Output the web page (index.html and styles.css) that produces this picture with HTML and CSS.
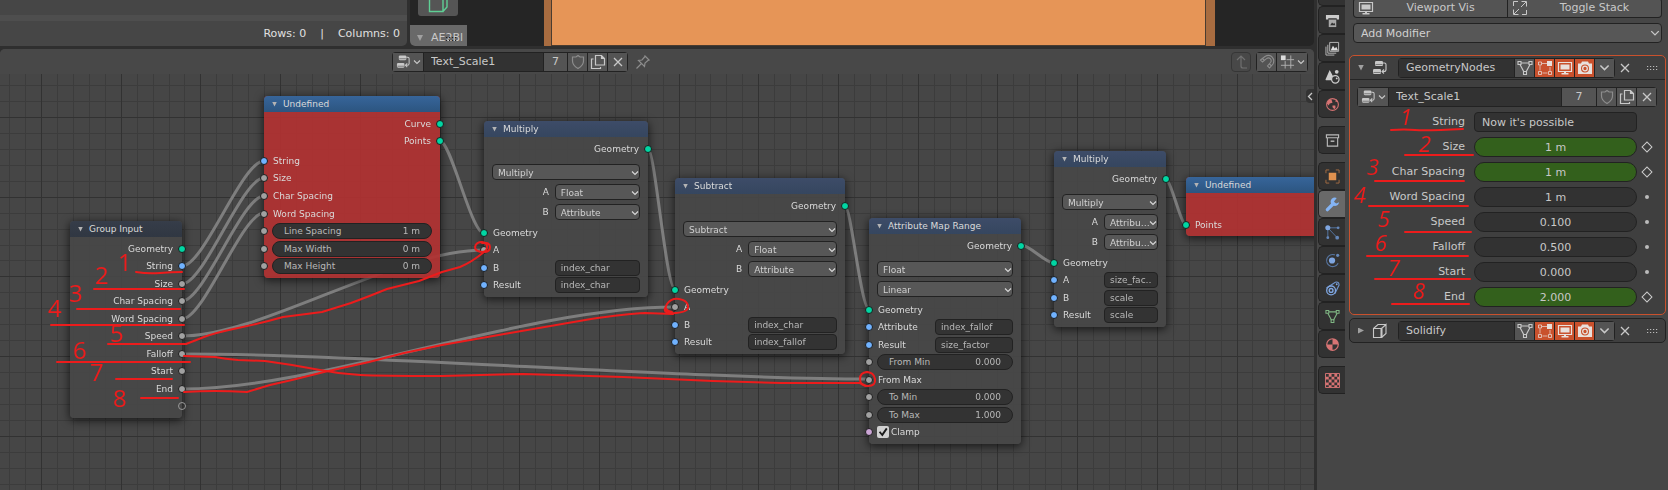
FILE: index.html
```html
<!DOCTYPE html>
<html lang="en">
<head>
    <meta charset="UTF-8">
    <meta name="viewport" content="width=device-width, initial-scale=1.0">
    <title>Geometry Nodes - Text_Scale1</title>
    <link rel="stylesheet" href="styles.css">
</head>
<body>
    <!-- Icon set -->
    <svg class="defs" aria-hidden="true">
        <symbol id="i-chevron" viewBox="0 0 8 8"><path d="M1 2.5 4 5.5 7 2.5" fill="none" stroke="currentColor" stroke-width="1.1"/></symbol>
        <symbol id="i-nodes" viewBox="0 0 16 16">
            <rect x="3" y="1" width="8" height="5" rx="1.2" fill="currentColor"/><rect x="1" y="9" width="8" height="5" rx="1.2" fill="currentColor"/>
            <path d="M3.5 4.5h7M1.5 12.5h7" stroke="#444" stroke-width=".6"/>
            <path d="M11 3h1.5q1.5 0 1.5 1.500v5q0 2-2 2H10M12 9.500l-2 2 2 2" fill="none" stroke="currentColor" stroke-width="1.100"/>
        </symbol>
        <symbol id="i-shield" viewBox="0 0 16 16"><path d="M8 1.500 10 3h3.500v4q0 4.500-5.500 7.500Q2.500 11.500 2.500 7V3H6z" fill="none" stroke="currentColor" stroke-width="1.200"/></symbol>
        <symbol id="i-copy" viewBox="0 0 16 16"><path d="M5.500 1.500h6l3 3v6.500h-9zM11.500 1.500v3h3M3.500 5h-2v9.500h9V13" fill="none" stroke="currentColor" stroke-width="1.200"/></symbol>
        <symbol id="i-close" viewBox="0 0 16 16"><path d="m4 4 8 8m0-8-8 8" stroke="currentColor" stroke-width="1.300"/></symbol>
        <symbol id="i-pin" viewBox="0 0 16 16"><path d="M9.500 1.500 14.500 6.500M10 2.500 7 6 3.500 6.500l6 6L10 9l3.500-3M6.500 9.500 1.500 14.500" fill="none" stroke="currentColor" stroke-width="1.200"/></symbol>
        <symbol id="i-up" viewBox="0 0 16 16"><path d="M4 6l4-4 4 4M8 2v10q0 2 2 2h4" fill="none" stroke="currentColor" stroke-width="1.200"/></symbol>
        <symbol id="i-magnet" viewBox="0 0 16 16"><path d="M1.500 6 6 2.500q4-2.500 7 .5t1 7L10.500 14 8.500 12l3-3.500q1.500-2-.2-3.800t-3.800 0L3.500 8zM3.500 4.500l2 2M12.500 12l-2-2" fill="none" stroke="currentColor" stroke-width="1.100"/></symbol>
        <symbol id="i-snap" viewBox="0 0 16 16"><path d="M5.500 7v8M11.500 1v14M7 5.500h8M1 11.500h14" stroke="currentColor" opacity=".8"/><rect x="1" y="1" width="5" height="5" fill="#ddd"/></symbol>
        <symbol id="i-mesh" viewBox="0 0 16 16"><path d="M4 3h8M3 4.500 7 12M13 4.500 9 12" stroke="currentColor" stroke-width="1.200"/><path d="M1 1.500h3v3H1zM12 1.500h3v3h-3zM6.500 11.500h3v3h-3z" fill="none" stroke="currentColor" stroke-width="1.100"/></symbol>
        <symbol id="i-edit" viewBox="0 0 16 16"><path d="M5 3.500h5M3 5.500v5M5.500 13h5M13 7v4" stroke="currentColor" opacity=".7"/><path d="M1.500 2h3v3h-3zM1.500 11.500h3v3h-3zM11.500 11.500h3v3h-3z" fill="none" stroke="currentColor" opacity=".75"/><rect x="10" y="1" width="5" height="5" fill="currentColor"/></symbol>
        <symbol id="i-screen" viewBox="0 0 16 16"><path d="M1.500 2.500h13v9h-13z" fill="none" stroke="currentColor" stroke-width="1.200"/><path d="M3.500 4.500h9v5h-9zM4.500 13h7v1.500h-7zM7 11h2v3H7z" fill="currentColor"/></symbol>
        <symbol id="i-camera" viewBox="0 0 16 16"><path fill-rule="evenodd" d="M5 1.500h6l1 2h3V14H1V3.500h3zM8 4.500a4 4 0 1 0 0 8 4 4 0 0 0 0-8z" fill="currentColor"/><circle cx="8" cy="8.500" r="2.300" fill="none" stroke="currentColor" stroke-width="1.300"/></symbol>
        <symbol id="i-solidify" viewBox="0 0 16 16"><path d="M1.500 5.500h8v9h-8zM9.500 5.500 14 1.500v9l-4.500 4M1.500 5.500l4.500-4h8" fill="none" stroke="currentColor" stroke-width="1.100"/><path d="M9.500 5.500v9" stroke="currentColor" stroke-width="2"/></symbol>
        <symbol id="i-expand" viewBox="0 0 16 16"><path d="M9 7l5-5M9.500 1.500h5v5M7 9l-5 5M1.500 9.500v5h5M1.500 6V1.500H6M10 14.500h4.500V10" fill="none" stroke="currentColor"/></symbol>
        <symbol id="i-grip" viewBox="0 0 12 6"><path d="M0 1.500h12M0 4.500h12" stroke="currentColor" stroke-width="1.200" stroke-dasharray="1.200 1.800"/></symbol>
    </svg>

    <div class="app">
        <div class="editors">
            <div class="top-row">
                <section class="spreadsheet">
                    <div class="sheet-rows"></div>
                    <footer class="sheet-footer"><span>Rows: 0</span><span>|</span><span>Columns: 0</span></footer>
                </section>
                <section class="viewport">
                    <div class="viewport-tools">
                        <button class="tool-button" aria-label="Add cube">
                            <svg width="22" height="14" viewBox="0 0 22 14"><path d="M2.500-2v13.500H16V-2M16 11.500 20 7V-2" fill="none" stroke="#5fcf95" stroke-width="1.400"/></svg>
                        </button>
                        <div class="operator"><i class="tri"></i><span>AE2Bl</span><svg class="operator-grip" width="12" height="6"><use href="#i-grip"/></svg></div>
                    </div>
                    <div class="plane"><div class="plane-face"></div></div>
                </section>
            </div>

            <main class="node-editor">
                <header class="node-header">
                    <div class="id-block">
                        <button class="browse" aria-label="Browse node trees"><svg width="15" height="16"><use href="#i-nodes"/></svg><svg width="8" height="8"><use href="#i-chevron"/></svg></button>
                        <input class="id-name" type="text" value="Text_Scale1" aria-label="Node tree name">
                        <button class="users">7</button>
                        <button class="dim" aria-label="Fake user"><svg width="16" height="16"><use href="#i-shield"/></svg></button>
                        <button aria-label="New"><svg width="16" height="16"><use href="#i-copy"/></svg></button>
                        <button aria-label="Unlink"><svg width="16" height="16"><use href="#i-close"/></svg></button>
                    </div>
                    <button class="plain" aria-label="Pin"><svg width="16" height="16"><use href="#i-pin"/></svg></button>
                    <div class="header-right">
                        <button class="parent" aria-label="Parent node tree"><svg width="16" height="16"><use href="#i-up"/></svg></button>
                        <div class="id-block">
                            <button class="dim" aria-label="Snap"><svg width="16" height="16"><use href="#i-magnet"/></svg></button>
                            <button class="browse" aria-label="Snap element"><svg width="15" height="16"><use href="#i-snap"/></svg><svg width="8" height="8"><use href="#i-chevron"/></svg></button>
                        </div>
                    </div>
                </header>

                <div class="canvas" id="canvas">
                    <canvas class="grid" id="grid"></canvas>

                    <!-- Links -->
                    <svg class="layer" width="1314" height="416" viewBox="0 74 1314 416">
                        <g class="links">
                            <path d="M182 266C204 266 242 161 264 161"/>
                            <path d="M182 284C204 284 242 178 264 178"/>
                            <path d="M182 301C204 301 242 196 264 196"/>
                            <path d="M182 319C204 319 242 213 264 213"/>
                            <path d="M182 336C262 336 395 250 484 250"/>
                            <path d="M182 354C362 354 689 379 869 379"/>
                            <path d="M182 389C322 389 525 307 675 307"/>
                            <path d="M440 141C451 141 471 233 484 233"/>
                            <path d="M648 149C655 149 666 289 675 289"/>
                            <path d="M845 206C851 206 861 309 869 309"/>
                            <path d="M1021 245C1030 245 1045 263 1054 263"/>
                            <path d="M1166 180C1171 180 1181 225 1186 225"/>
                        </g>
                    </svg>

                    <!-- Nodes -->
                    <article class="node group-input">
                        <h2 class="node-title"><i class="tri"></i>Group Input</h2>
                        <div class="rows rows-10">
                            <div class="row out">Geometry<i class="socket geo"></i></div>
                            <div class="row out">String<i class="socket str"></i></div>
                            <div class="row out">Size<i class="socket"></i></div>
                            <div class="row out">Char Spacing<i class="socket"></i></div>
                            <div class="row out">Word Spacing<i class="socket"></i></div>
                            <div class="row out">Speed<i class="socket"></i></div>
                            <div class="row out">Falloff<i class="socket"></i></div>
                            <div class="row out">Start<i class="socket"></i></div>
                            <div class="row out">End<i class="socket"></i></div>
                            <div class="row out"><i class="socket empty"></i></div>
                        </div>
                    </article>

                    <article class="node undefined string-node">
                        <h2 class="node-title"><i class="tri"></i>Undefined</h2>
                        <div class="rows rows-2">
                            <div class="row out">Curve<i class="socket geo"></i></div>
                            <div class="row out">Points<i class="socket geo"></i></div>
                        </div>
                        <div class="rows rows-7">
                            <div class="row"><i class="socket str"></i>String</div>
                            <div class="row"><i class="socket"></i>Size</div>
                            <div class="row"><i class="socket"></i>Char Spacing</div>
                            <div class="row"><i class="socket"></i>Word Spacing</div>
                            <div class="row"><i class="socket"></i><div class="slider"><label for="line-spacing">Line Spacing</label><input id="line-spacing" type="text" value="1 m"></div></div>
                            <div class="row"><i class="socket"></i><div class="slider"><label for="max-width">Max Width</label><input id="max-width" type="text" value="0 m"></div></div>
                            <div class="row"><i class="socket"></i><div class="slider"><label for="max-height">Max Height</label><input id="max-height" type="text" value="0 m"></div></div>
                        </div>
                    </article>

                    <article class="node multiply">
                        <h2 class="node-title"><i class="tri"></i>Multiply</h2>
                        <div class="row out">Geometry<i class="socket geo"></i></div>
                        <div class="options">
                            <div class="option"><div class="select"><select aria-label="Operation"><option>Multiply</option></select><svg><use href="#i-chevron"/></svg></div></div>
                            <div class="option split"><label for="m1-a">A</label><div class="select"><select id="m1-a"><option>Float</option></select><svg><use href="#i-chevron"/></svg></div></div>
                            <div class="option split"><label for="m1-b">B</label><div class="select"><select id="m1-b"><option>Attribute</option></select><svg><use href="#i-chevron"/></svg></div></div>
                        </div>
                        <div class="rows rows-4">
                            <div class="row"><i class="socket geo"></i>Geometry</div>
                            <div class="row"><i class="socket"></i>A</div>
                            <div class="row split"><i class="socket str"></i><label for="m1-bn">B</label><input class="text" id="m1-bn" type="text" value="index_char"></div>
                            <div class="row split"><i class="socket str"></i><label for="m1-r">Result</label><input class="text" id="m1-r" type="text" value="index_char"></div>
                        </div>
                    </article>

                    <article class="node subtract">
                        <h2 class="node-title"><i class="tri"></i>Subtract</h2>
                        <div class="row out">Geometry<i class="socket geo"></i></div>
                        <div class="options">
                            <div class="option"><div class="select"><select aria-label="Operation"><option>Subtract</option></select><svg><use href="#i-chevron"/></svg></div></div>
                            <div class="option split"><label for="s-a">A</label><div class="select"><select id="s-a"><option>Float</option></select><svg><use href="#i-chevron"/></svg></div></div>
                            <div class="option split"><label for="s-b">B</label><div class="select"><select id="s-b"><option>Attribute</option></select><svg><use href="#i-chevron"/></svg></div></div>
                        </div>
                        <div class="rows rows-4">
                            <div class="row"><i class="socket geo"></i>Geometry</div>
                            <div class="row"><i class="socket"></i>A</div>
                            <div class="row split"><i class="socket str"></i><label for="s-bn">B</label><input class="text" id="s-bn" type="text" value="index_char"></div>
                            <div class="row split"><i class="socket str"></i><label for="s-r">Result</label><input class="text" id="s-r" type="text" value="index_fallof"></div>
                        </div>
                    </article>

                    <article class="node map-range">
                        <h2 class="node-title"><i class="tri"></i>Attribute Map Range</h2>
                        <div class="row out">Geometry<i class="socket geo"></i></div>
                        <div class="options">
                            <div class="option"><div class="select"><select aria-label="Data type"><option>Float</option></select><svg><use href="#i-chevron"/></svg></div></div>
                            <div class="option"><div class="select"><select aria-label="Interpolation"><option>Linear</option></select><svg><use href="#i-chevron"/></svg></div></div>
                        </div>
                        <div class="rows rows-8">
                            <div class="row"><i class="socket geo"></i>Geometry</div>
                            <div class="row split"><i class="socket str"></i><label for="r-a">Attribute</label><input class="text" id="r-a" type="text" value="index_fallof"></div>
                            <div class="row split"><i class="socket str"></i><label for="r-r">Result</label><input class="text" id="r-r" type="text" value="size_factor"></div>
                            <div class="row"><i class="socket"></i><div class="slider"><label for="from-min">From Min</label><input id="from-min" type="text" value="0.000"></div></div>
                            <div class="row"><i class="socket"></i>From Max</div>
                            <div class="row"><i class="socket"></i><div class="slider"><label for="to-min">To Min</label><input id="to-min" type="text" value="0.000"></div></div>
                            <div class="row"><i class="socket"></i><div class="slider"><label for="to-max">To Max</label><input id="to-max" type="text" value="1.000"></div></div>
                            <div class="row"><i class="socket bool"></i><input class="check" id="clamp" type="checkbox" checked><label for="clamp">Clamp</label></div>
                        </div>
                    </article>

                    <article class="node multiply-scale">
                        <h2 class="node-title"><i class="tri"></i>Multiply</h2>
                        <div class="row out">Geometry<i class="socket geo"></i></div>
                        <div class="options">
                            <div class="option"><div class="select"><select aria-label="Operation"><option>Multiply</option></select><svg><use href="#i-chevron"/></svg></div></div>
                            <div class="option split"><label for="m2-a">A</label><div class="select"><select id="m2-a"><option>Attribu…</option></select><svg><use href="#i-chevron"/></svg></div></div>
                            <div class="option split"><label for="m2-b">B</label><div class="select"><select id="m2-b"><option>Attribu…</option></select><svg><use href="#i-chevron"/></svg></div></div>
                        </div>
                        <div class="rows rows-4">
                            <div class="row"><i class="socket geo"></i>Geometry</div>
                            <div class="row split"><i class="socket str"></i><label for="m2-an">A</label><input class="text" id="m2-an" type="text" value="size_fac…"></div>
                            <div class="row split"><i class="socket str"></i><label for="m2-bn">B</label><input class="text" id="m2-bn" type="text" value="scale"></div>
                            <div class="row split"><i class="socket str"></i><label for="m2-r">Result</label><input class="text" id="m2-r" type="text" value="scale"></div>
                        </div>
                    </article>

                    <article class="node undefined points-node">
                        <h2 class="node-title"><i class="tri"></i>Undefined</h2>
                        <div class="row"><i class="socket geo"></i>Points</div>
                    </article>

                    <!-- Annotation strokes -->
                    <svg class="layer ink" width="1314" height="416" viewBox="0 74 1314 416">
                        <path d="M136 272q12 2 24 1t22-1M94 289h90M77 309h103M51 325h133M108 344h78M57 362h133M116 379h56M141 398h37"/>
                        <path d="M186 344Q194 341 204 337T238 328 283 317L322 312 351 303Q370 296 387 289L419 281 442 272 460 267Q472 262 484 252"/>
                        <path d="M484 252q-9 0-9-5 1-5 7-5 6 1 5 6-1 4-5 4M482 243q8-1 8 4t-6 5"/>
                        <path d="M184 356L215 357Q225 359 238 360L265 361 292 365 320 370Q340 374 360 375T442 376L523 374 623 377 713 381 781 383H860L866 386"/>
                        <path d="M866 372q8 0 9 7t-7 7-8-7 8-7"/>
                        <path d="M184 392Q200 391 215 391T247 392L270 385 292 380 324 372 369 362Q405 352 442 345L510 333 591 319Q625 314 645 313L673 314"/>
                        <path d="M672 312q-9-2-5-8t12-5 9 7-12 7-11-5"/>
                        <g class="digits">
                            <text x="118" y="271">1</text><text x="95" y="284">2</text><text x="69" y="302">3</text><text x="48" y="317">4</text>
                            <text x="110" y="342">5</text><text x="73" y="359">6</text><text x="90" y="381">7</text><text x="113" y="407">8</text>
                        </g>
                    </svg>

                    <button class="sidebar-toggle" aria-label="Show sidebar"><svg width="6" height="9" viewBox="0 0 6 9"><path d="M5 1 1.500 4.500 5 8" fill="none" stroke="currentColor" stroke-width="1.300"/></svg></button>
                </div>
            </main>
        </div>

        <aside class="properties">
            <nav class="tabs">
                <button class="tab" aria-label="Render"></button>
                <button class="tab" aria-label="Output"><svg viewBox="0 0 16 16"><path d="M1 2h14v5h-2.500V5.500h-9V7H1z" fill="#ccc"/><path d="M4 7h8v8H4z" fill="#aaa"/><path d="m5.500 13 2-3 1.500 1.500 1-1 1 2.500z" fill="#333"/></svg></button>
                <button class="tab" aria-label="View layer"><svg viewBox="0 0 16 16"><path d="M5 1.500h9.500V11H5zM3 4v9h9M1 6v9h9" fill="none" stroke="#bbb"/><path d="m6 10 2.500-5 2 3L12 6l2 4z" fill="#ddd"/></svg></button>
                <button class="tab" aria-label="Scene"><svg viewBox="0 0 16 16"><path d="M5 1 9 8.500 7 12H1q-1-1 0-2z" fill="#ccc"/><circle cx="12.500" cy="3" r="2" fill="#ccc"/><circle cx="11" cy="11" r="4" fill="#333" stroke="#ccc" stroke-width="1.300"/><circle cx="12.500" cy="10" r="1" fill="#ccc"/></svg></button>
                <button class="tab" aria-label="World"><svg viewBox="0 0 16 16"><circle cx="8" cy="8" r="6.300" fill="none" stroke="#d07070" stroke-width="1.200"/><path d="M3 4q3-2 4-1l1 3-3 1-1 2-2-2zM8 9l3 0q1 2-1 4l-2-2zM12 2l2 3-3 0z" fill="#d87474"/></svg></button>
                <button class="tab spaced" aria-label="Collection"><svg viewBox="0 0 16 16"><path d="M1.500 2h13v3h-13zM2.500 5v9h11V5" fill="none" stroke="#bbb" stroke-width="1.200"/><path d="M6 8h4v1.500H6z" fill="#bbb"/></svg></button>
                <button class="tab spaced" aria-label="Object"><svg viewBox="0 0 16 16"><path d="M4 4h8v8H4z" fill="#e0914f"/><path d="M1 4.500V1h3.500M11.500 1H15v3.500M15 11.500V15h-3.500M4.500 15H1v-3.500" fill="none" stroke="#a56d42"/></svg></button>
                <button class="tab active" aria-label="Modifiers"><svg viewBox="0 0 16 16"><path d="M2.500 13.500 8.500 7.500" stroke="#84b4f4" stroke-width="3.500" stroke-linecap="round"/><path d="M12.500 1A4.500 4.500 0 1 0 15 5.500l-3 1.500-2.500-2z" fill="#84b4f4"/></svg></button>
                <button class="tab" aria-label="Particles"><svg viewBox="0 0 16 16"><path d="M3 3h11M3 3v10M3 3l9.500 10" stroke="#5577a5"/><circle cx="3" cy="3" r="2.700" fill="#7fa6e0"/><circle cx="14" cy="3" r="1.500" fill="#6587b8"/><circle cx="3" cy="13.500" r="1.500" fill="#6587b8"/><circle cx="13" cy="13.500" r="2" fill="#6587b8"/></svg></button>
                <button class="tab" aria-label="Physics"><svg viewBox="0 0 16 16"><path d="M10.500 2A6.500 6.500 0 1 0 14 11" fill="none" stroke="#56749f" stroke-width="1.200"/><circle cx="7.500" cy="8" r="3.300" fill="#7fa6e0"/><circle cx="13.500" cy="2.500" r="1.700" fill="#6587b8"/></svg></button>
                <button class="tab" aria-label="Constraints"><svg viewBox="0 0 16 16"><path d="M1.500 7.500 11 1.300q4-1 4 3L10.500 13.500" fill="none" stroke="#6f94cc" stroke-width="1.200"/><circle cx="6.500" cy="10" r="4.700" fill="none" stroke="#7fa6e0" stroke-width="1.400"/><circle cx="6.500" cy="10" r="2" fill="none" stroke="#7fa6e0" stroke-width="1.500"/><circle cx="12.500" cy="3.500" r="1" fill="#7fa6e0"/></svg></button>
                <button class="tab data" aria-label="Object data"><svg viewBox="0 0 16 16"><use href="#i-mesh"/></svg></button>
                <button class="tab" aria-label="Material"><svg viewBox="0 0 16 16"><circle cx="8" cy="8" r="6.800" fill="#d87474"/><path d="M8 2.500V8H2.500A5.500 5.500 0 0 1 8 2.500zM8 8h5.500A5.500 5.500 0 0 1 8 13.500z" fill="#333"/></svg></button>
                <button class="tab spaced" aria-label="Texture"><svg viewBox="0 0 16 16"><path d="M.5.5h15v15H.5z" fill="#333" stroke="#d87474"/><path d="M4 1h3v3H4zM10 1h3v3h-3zM1 4h3v3H1zM7 4h3v3H7zM13 4h2v3h-2zM4 7h3v3H4zM10 7h3v3h-3zM1 10h3v3H1zM7 10h3v3H7zM13 10h2v3h-2zM4 13h3v2H4zM10 13h3v2h-3z" fill="#d87474"/></svg></button>
            </nav>

            <div class="panels">
                <div class="button-row">
                    <button><svg width="16" height="16"><use href="#i-screen"/></svg><span>Viewport Vis</span></button>
                    <button><svg width="16" height="16"><use href="#i-expand"/></svg><span>Toggle Stack</span></button>
                </div>
                <div class="select add-modifier"><select aria-label="Add Modifier"><option>Add Modifier</option></select><svg><use href="#i-chevron"/></svg></div>

                <section class="modifier selected">
                    <header class="modifier-header">
                        <i class="tri"></i>
                        <svg class="modifier-icon" width="16" height="16"><use href="#i-nodes"/></svg>
                        <div class="id-block">
                            <input class="id-name" type="text" value="GeometryNodes" aria-label="Modifier name">
                            <button aria-label="On cage"><svg width="16" height="16"><use href="#i-mesh"/></svg></button>
                            <button class="on" aria-label="Edit mode"><svg width="16" height="16"><use href="#i-edit"/></svg></button>
                            <button class="on" aria-label="Realtime"><svg width="16" height="16"><use href="#i-screen"/></svg></button>
                            <button class="on" aria-label="Render"><svg width="16" height="16"><use href="#i-camera"/></svg></button>
                            <button aria-label="More"><svg width="11" height="11"><use href="#i-chevron"/></svg></button>
                        </div>
                        <button class="plain" aria-label="Remove"><svg width="16" height="16"><use href="#i-close"/></svg></button>
                        <svg class="grip" width="12" height="6"><use href="#i-grip"/></svg>
                    </header>
                    <div class="modifier-body">
                        <div class="id-block">
                            <button class="browse" aria-label="Browse node groups"><svg width="15" height="16"><use href="#i-nodes"/></svg><svg width="8" height="8"><use href="#i-chevron"/></svg></button>
                            <input class="id-name" type="text" value="Text_Scale1" aria-label="Node group">
                            <button class="users">7</button>
                            <button class="dim" aria-label="Fake user"><svg width="16" height="16"><use href="#i-shield"/></svg></button>
                            <button aria-label="New"><svg width="16" height="16"><use href="#i-copy"/></svg></button>
                            <button aria-label="Unlink"><svg width="16" height="16"><use href="#i-close"/></svg></button>
                        </div>
                        <div class="prop"><label for="p-string">String</label><input class="string" id="p-string" type="text" value="Now it's possible"><i></i></div>
                        <div class="prop"><label for="p-size">Size</label><input class="keyed" id="p-size" type="text" value="1 m"><i class="diamond"></i></div>
                        <div class="prop"><label for="p-char">Char Spacing</label><input class="keyed" id="p-char" type="text" value="1 m"><i class="diamond"></i></div>
                        <div class="prop"><label for="p-word">Word Spacing</label><input id="p-word" type="text" value="1 m"><i class="dot"></i></div>
                        <div class="prop"><label for="p-speed">Speed</label><input id="p-speed" type="text" value="0.100"><i class="dot"></i></div>
                        <div class="prop"><label for="p-falloff">Falloff</label><input id="p-falloff" type="text" value="0.500"><i class="dot"></i></div>
                        <div class="prop"><label for="p-start">Start</label><input id="p-start" type="text" value="0.000"><i class="dot"></i></div>
                        <div class="prop"><label for="p-end">End</label><input class="keyed" id="p-end" type="text" value="2.000"><i class="diamond"></i></div>
                    </div>
                </section>

                <section class="modifier">
                    <header class="modifier-header">
                        <i class="tri closed"></i>
                        <svg class="modifier-icon" width="16" height="16"><use href="#i-solidify"/></svg>
                        <div class="id-block">
                            <input class="id-name" type="text" value="Solidify" aria-label="Modifier name">
                            <button aria-label="On cage"><svg width="16" height="16"><use href="#i-mesh"/></svg></button>
                            <button class="on" aria-label="Edit mode"><svg width="16" height="16"><use href="#i-edit"/></svg></button>
                            <button class="on" aria-label="Realtime"><svg width="16" height="16"><use href="#i-screen"/></svg></button>
                            <button class="on" aria-label="Render"><svg width="16" height="16"><use href="#i-camera"/></svg></button>
                            <button aria-label="More"><svg width="11" height="11"><use href="#i-chevron"/></svg></button>
                        </div>
                        <button class="plain" aria-label="Remove"><svg width="16" height="16"><use href="#i-close"/></svg></button>
                        <svg class="grip" width="12" height="6"><use href="#i-grip"/></svg>
                    </header>
                </section>
            </div>

            <svg class="layer ink" width="351" height="490" viewBox="1317 0 351 490">
                <path d="M1391 130Q1405 129 1415 130T1463 129M1405 155h68M1375 181h89M1369 206h99M1405 232h66M1367 256h101M1375 279h95M1392 304h77"/>
                <g class="digits tilted">
                    <text x="1400" y="125">1</text><text x="1419" y="152">2</text><text x="1367" y="175">3</text><text x="1354" y="203">4</text>
                    <text x="1378" y="227">5</text><text x="1375" y="251">6</text><text x="1388" y="276">7</text><text x="1413" y="299">8</text>
                </g>
            </svg>
        </aside>
    </div>

    <script>
        // Background grid of the node canvas, every fifth line is darker
        const area = document.getElementById('canvas');
        const grid = document.getElementById('grid');
        const STEP = 15.94;
        const ORIGIN_X = 41;
        const ORIGIN_Y = 43;

        function drawGrid() {
            grid.width = area.clientWidth;
            grid.height = area.clientHeight;
            const ctx = grid.getContext('2d');

            for (const major of [false, true]) {
                ctx.fillStyle = major ? '#323232' : '#3c3c3c';
                for (let i = -10; ORIGIN_X + i * STEP < grid.width; i++) {
                    if ((i % 5 === 0) === major) ctx.fillRect(Math.round(ORIGIN_X + i * STEP), 0, 1, grid.height);
                }
                for (let i = -10; ORIGIN_Y + i * STEP < grid.height; i++) {
                    if ((i % 5 === 0) === major) ctx.fillRect(0, Math.round(ORIGIN_Y + i * STEP), grid.width, 1);
                }
            }
        }

        drawGrid();
        window.addEventListener('resize', drawGrid);
    </script>
</body>
</html>
```

FILE: styles.css
```css
* {
    margin: 0;
    padding: 0;
    box-sizing: border-box;
}

body {
    font-family: "DejaVu Sans", Verdana, sans-serif;
    font-size: 11px;
    line-height: 16px;
    color: #c8c8c8;
    background: #2f2f2f;
}

button, input, select {
    font: inherit;
    color: inherit;
    background: none;
    border: none;
    border-radius: 0;
    outline: none;
    appearance: none;
    min-width: 0;
}

svg {
    flex: none;
}

.defs {
    display: none;
}

/* Areas */
.app {
    display: flex;
    gap: 3px;
    min-height: 100vh;
}

.editors {
    flex: 1;
    min-width: 0;
    display: flex;
    flex-direction: column;
    gap: 3px;
}

.top-row {
    display: flex;
    gap: 3px;
    height: 46px;
}

.spreadsheet {
    flex: 0 0 407px;
    background: #464646;
    border-bottom-right-radius: 5px;
}

.sheet-rows {
    height: 21px;
    border-bottom: 6px solid #4e4e4e;
}

.sheet-footer {
    display: flex;
    justify-content: flex-end;
    gap: 14px;
    padding: 5px 7px;
    color: #e0e0e0;
}

.viewport {
    flex: 1;
    display: flex;
    padding-right: 99px;
    background: #252525;
    border-radius: 0 0 5px 5px;
    overflow: hidden;
}

.viewport-tools {
    flex: 0 0 134px;
    display: flex;
    flex-direction: column;
    justify-content: space-between;
    align-items: flex-start;
}

.tool-button {
    width: 40px;
    height: 16px;
    margin-left: 8px;
    background: #555;
    border-radius: 0 0 3px 3px;
    text-align: center;
}

.operator {
    position: relative;
    display: flex;
    align-items: center;
    gap: 8px;
    width: 57px;
    height: 21px;
    padding: 5px 0 0 7px;
    background: #696969;
}

.operator-grip {
    position: absolute;
    left: 36px;
    top: 11px;
    color: #222;
}

.plane {
    flex: 1;
    padding: 0 9px 0 7px;
    background: #a86c40;
}

.plane-face {
    height: 46px;
    background: #e69557;
    border: solid #4a3c30;
    border-width: 0 1px 1px;
}

/* Triangles */
.tri {
    flex: none;
    width: 6px;
    height: 6px;
    background: #a0a0a0;
    clip-path: polygon(0 0, 100% 0, 50% 100%);
}

.tri.closed {
    clip-path: polygon(0 0, 100% 50%, 0 100%);
}

/* Joined button groups */
.id-block {
    display: flex;
    gap: 1px;
    height: 20px;
    padding: 1px;
    background: #222;
    border-radius: 4px;
    overflow: hidden;
}

.id-block button {
    display: flex;
    align-items: center;
    justify-content: center;
    width: 19px;
    background: #545454;
}

.id-block .browse {
    gap: 2px;
    width: 30px;
}

.id-block .users {
    width: 23px;
}

.id-block .dim {
    color: #8c8c8c;
}

.id-block .on {
    background: #c9512d;
    color: #e8e0dc;
}

.id-name {
    width: 119px;
    padding: 0 7px;
    background: #323232;
}

.plain {
    display: flex;
    align-items: center;
    justify-content: center;
    width: 20px;
    height: 20px;
}

/* Node editor */
.node-editor {
    flex: 1;
    display: flex;
    flex-direction: column;
    border-radius: 5px 5px 0 0;
    background: #464646;
    overflow: hidden;
}

.node-header {
    display: flex;
    align-items: center;
    gap: 5px;
    height: 25px;
    padding: 1px 6px 0 392px;
    background: #484848;
}

.node-header .plain {
    color: #8c8c8c;
}

.header-right {
    display: flex;
    gap: 5px;
    margin-left: auto;
}

.parent {
    display: flex;
    align-items: center;
    justify-content: center;
    width: 20px;
    height: 20px;
    border: 1px solid #363636;
    border-radius: 4px;
    color: #707070;
}

.canvas {
    position: relative;
    flex: 1;
    overflow: hidden;
}

.grid {
    position: absolute;
    inset: 0;
}

.layer {
    position: absolute;
    left: 0;
    top: 0;
    pointer-events: none;
}

.links {
    fill: none;
    stroke: #7e7e7e;
    stroke-width: 3;
}

.ink {
    fill: none;
    stroke: #ec1c1c;
    stroke-width: 2;
    stroke-linecap: round;
    stroke-linejoin: round;
}

.digits {
    font-family: "Open Sans", "Noto Sans", sans-serif;
    font-size: 24px;
    fill: #ec1c1c;
    stroke: none;
}

.tilted {
    font-size: 22px;
    font-style: italic;
}

.sidebar-toggle {
    position: absolute;
    right: 0;
    top: 15px;
    display: flex;
    align-items: center;
    justify-content: center;
    width: 8px;
    height: 14px;
    background: #333;
    border-radius: 4px 0 0 4px;
}

/* Nodes */
.node {
    position: absolute;
    padding-bottom: 3px;
    font-size: 9px;
    line-height: 16px;
    color: #dadada;
    background: rgba(72, 72, 72, 0.88);
    border-radius: 4px;
    box-shadow: 0 2px 8px 1px rgba(0, 0, 0, 0.6);
}

.node-title {
    display: flex;
    align-items: center;
    gap: 6px;
    height: 16px;
    margin-bottom: 3px;
    padding-left: 8px;
    font-size: 9px;
    font-weight: 400;
    background: linear-gradient(#3d4c68, #35465f);
    border-radius: 4px 4px 0 0;
}

.node-title .tri {
    width: 5px;
    height: 5px;
    background: #b4b4b4;
}

.group-input {
    left: 70px;
    top: 147px;
    width: 112px;
}

.group-input .node-title {
    background: linear-gradient(#363d49, #303742);
}

.undefined {
    background: rgba(176, 50, 50, 0.93);
}

.undefined .node-title {
    background: linear-gradient(#37659a, #2c5580);
}

.string-node {
    left: 264px;
    top: 22px;
    width: 176px;
}

.string-node .rows-2 {
    margin-bottom: 2px;
}

.multiply {
    left: 484px;
    top: 47px;
    width: 164px;
}

.subtract {
    left: 675px;
    top: 104px;
    width: 170px;
}

.map-range {
    left: 869px;
    top: 144px;
    width: 152px;
}

.multiply-scale {
    left: 1054px;
    top: 77px;
    width: 112px;
}

.points-node {
    left: 1186px;
    top: 103px;
    width: 176px;
}

.points-node .row {
    margin-top: 23px;
}

/* Node rows share the height of their block evenly */
.rows {
    display: flex;
    flex-direction: column;
}

.rows-2 {
    height: 35px;
}

.rows-4 {
    height: 70px;
}

.rows-7 {
    height: 123px;
}

.rows-8 {
    height: 140px;
}

.rows-10 {
    height: 175px;
}

.row {
    position: relative;
    display: flex;
    align-items: center;
    height: 17px;
    padding: 0 8px 0 9px;
}

.rows .row {
    flex: 1;
}

.row.out {
    justify-content: flex-end;
    padding: 0 9px;
}

.split {
    display: grid;
    grid-template-columns: minmax(0, 2fr) minmax(0, 3fr);
    gap: 6px;
    align-items: center;
}

.row.split {
    display: grid;
    padding-left: 8px;
}

.row.split label {
    padding-left: 1px;
}

.socket {
    position: absolute;
    left: -4px;
    width: 8px;
    height: 8px;
    background: #a1a1a1;
    border: 1px solid #1c1c1c;
    border-radius: 50%;
}

.out .socket {
    left: auto;
    right: -4px;
}

.socket.geo {
    background: #00d6a3;
}

.socket.str {
    background: #70b2ff;
}

.socket.bool {
    background: #cca6d6;
}

.socket.empty {
    background: none;
    border-color: #999;
}

.options {
    margin: 5px 8px 2px;
}

.option {
    height: 20px;
    padding: 2px 0;
}

.option label {
    text-align: right;
}

.select {
    position: relative;
}

.select select {
    display: block;
    width: 100%;
    height: 16px;
    padding: 0 5px;
    background: #575757;
    border: 1px solid #222;
    border-radius: 4px;
    color: #d0d0d0;
}

.select svg {
    position: absolute;
    right: 1px;
    top: 5px;
    width: 8px;
    height: 8px;
    pointer-events: none;
}

.text {
    width: 100%;
    height: 16px;
    padding: 0 5px;
    background: #333;
    border: 1px solid #222;
    border-radius: 4px;
    color: #b8b8b8;
}

.slider {
    flex: 1;
    display: flex;
    height: 16px;
    margin-left: -1px;
    padding: 0 11px;
    background: #333;
    border: 1px solid #222;
    border-radius: 8px;
    line-height: 14px;
    color: #b8b8b8;
}

.slider label {
    flex: 1;
}

.slider input {
    width: 30px;
    text-align: right;
}

.check {
    width: 12px;
    height: 12px;
    margin: 0 2px 0 -1px;
    background: #d0d0d0;
    border-radius: 2px;
}

.check:checked::after {
    content: "";
    display: block;
    width: 12px;
    height: 12px;
    background: #1a1a1a;
    clip-path: polygon(15% 50%, 28% 42%, 42% 60%, 75% 12%, 88% 22%, 45% 86%);
}

/* Properties editor */
.properties {
    position: relative;
    flex: 0 0 351px;
    display: flex;
    background: #464646;
    overflow: hidden;
}

.tabs {
    flex: 0 0 28px;
    padding-left: 1px;
    margin-top: -22px;
}

.tab {
    display: flex;
    align-items: center;
    justify-content: center;
    width: 27px;
    height: 28px;
    background: #323232;
    border: 1px solid #222;
    border-right: none;
    border-radius: 5px 0 0 5px;
}

.tab svg {
    width: 15px;
    height: 15px;
}

.tab.spaced {
    margin-top: 8px;
}

.tab.active {
    background: #696969;
}

.tab.data {
    color: #7fb583;
}

.panels {
    flex: 1;
    min-width: 0;
    padding: 0 2px 0 4px;
}

.button-row {
    display: flex;
    gap: 1px;
    height: 20px;
    margin: -2px 4px 0;
    padding: 1px;
    background: #222;
    border-radius: 4px;
}

.button-row button {
    flex: 1;
    display: flex;
    align-items: center;
    padding-left: 4px;
    background: #545454;
}

.button-row button:first-child {
    border-radius: 3px 0 0 3px;
}

.button-row button:last-child {
    border-radius: 0 3px 3px 0;
}

.button-row span {
    flex: 1;
    text-align: center;
}

.add-modifier {
    margin: 5px 4px 12px;
}

.add-modifier select {
    height: 20px;
    padding: 1px 7px 0;
}

.add-modifier svg {
    right: 2px;
    top: 5px;
    width: 10px;
    height: 10px;
}

.modifier {
    margin-bottom: 3px;
    background: #3f3f3f;
    border: 1px solid #222;
    border-radius: 5px;
}

.modifier.selected {
    border-color: #c9512d;
}

.modifier-header {
    display: flex;
    align-items: center;
    height: 23px;
    padding: 0 6px 0 8px;
}

.selected .modifier-header {
    height: 24px;
    border-bottom: 1px solid #252525;
}

.modifier-icon {
    margin: 0 10px 0 8px;
}

.modifier-header .id-block {
    flex: 1;
}

.modifier-header .id-name {
    flex: 1;
}

.modifier-header .grip {
    margin-left: 12px;
    color: #bbb;
}

.modifier-body {
    padding: 7px 8px 2px 7px;
}

.modifier-body .id-block {
    margin-bottom: 5px;
}

.modifier-body .id-name {
    flex: 1;
}

.modifier-body .users {
    width: 34px;
}

.prop {
    display: grid;
    grid-template-columns: 39% 1fr 20px;
    align-items: center;
    height: 20px;
    margin-bottom: 5px;
}

.prop label {
    padding-right: 9px;
    text-align: right;
}

.prop input {
    height: 20px;
    padding: 0 7px;
    background: #323232;
    border: 1px solid #222;
    border-radius: 10px;
    text-align: center;
}

.prop .string {
    border-radius: 4px;
    text-align: left;
}

.prop .keyed {
    background: #33601c;
}

.diamond {
    justify-self: center;
    width: 8px;
    height: 8px;
    border: 1px solid #ccc;
    transform: rotate(45deg);
}

.dot {
    justify-self: center;
    width: 4px;
    height: 4px;
    background: #bbb;
    border-radius: 50%;
}
```
